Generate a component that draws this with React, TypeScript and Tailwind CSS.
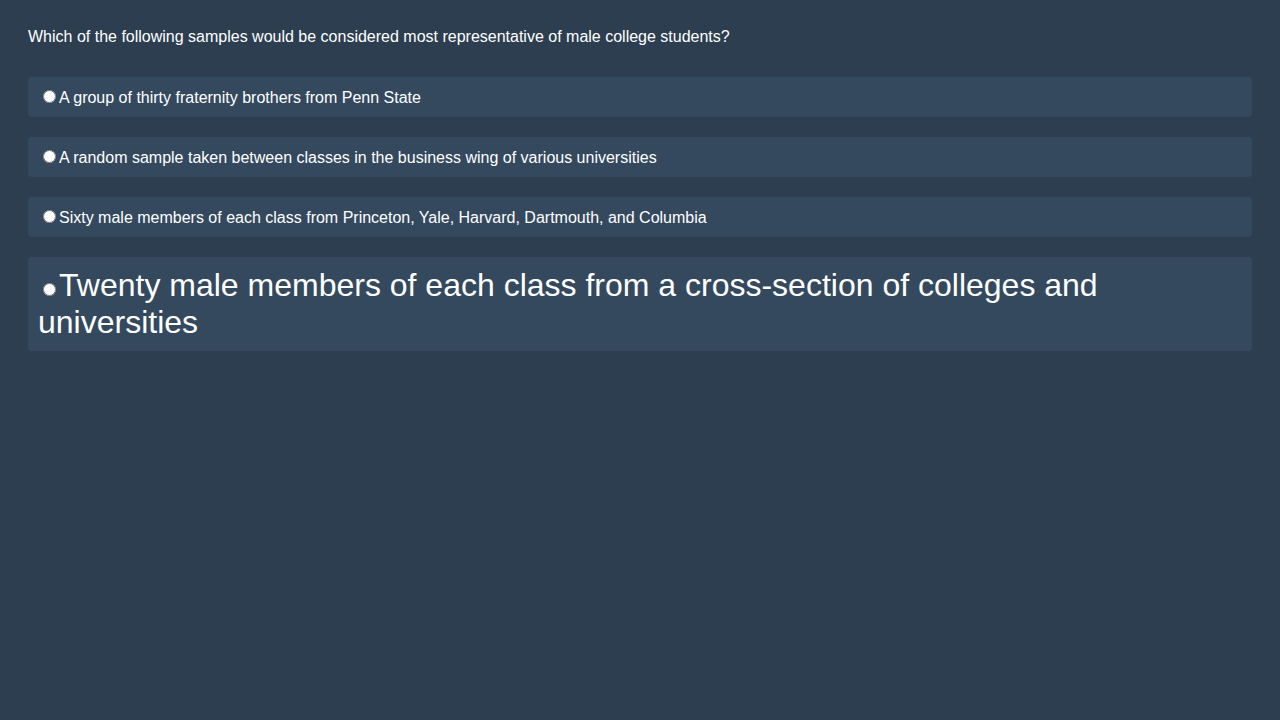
import React from "react";

const options = [
  "A group of thirty fraternity brothers from Penn State",
  "A random sample taken between classes in the business wing of various universities",
  "Sixty male members of each class from Princeton, Yale, Harvard, Dartmouth, and Columbia",
];

export default function App() {
  return (
    <div
      className="min-h-[720px] w-full bg-[#2c3e50] p-[28px] text-white leading-[normal]"
      style={{ fontFamily: '"Liberation Sans", Arial, sans-serif' }}
    >
      <p className="mb-[31px] text-[16px] leading-[normal]">
        Which of the following samples would be considered most representative of male college students?
      </p>
      {options.map((o) => (
        <div key={o} className="mb-[20px] rounded-[4px] bg-[#34495e] p-[10px] text-[16px] leading-[normal]">
          <label>
            <input type="radio" name="q" className="ml-[5px] mr-[3px] mt-[3px]" />
            {o}
          </label>
        </div>
      ))}
      <div className="mb-[20px] rounded-[4px] bg-[#34495e] p-[10px] text-[32px] leading-[normal]">
        <label>
          <input type="radio" name="q" className="ml-[5px] mr-[3px] mt-[3px]" />
          Twenty male members of each class from a cross-section of colleges and universities
        </label>
      </div>
    </div>
  );
}
